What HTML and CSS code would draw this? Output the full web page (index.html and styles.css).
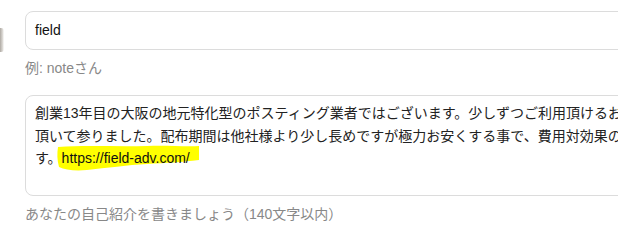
FILE: index.html
```html
<!DOCTYPE html>
<html lang="ja">
<head>
<meta charset="utf-8">
<link rel="stylesheet" href="styles.css">
</head>
<body>
<div class="page">
  <div class="edge"></div>
  <div class="form">
    <div class="input">field</div>
    <div class="hint hint-name">例: noteさん</div>
    <div class="textarea">
      <svg class="marker" width="150" height="30" viewBox="0 0 150 30" aria-hidden="true">
        <path d="M1 2 C30 0 60 2 90 1 C110 0 128 2 142 1 L142 15 C125 17 110 18 90 19 C70 20 50 23 30 25 C18 26 8 25 2 22 C0 15 0 8 1 2 Z" fill="#ffff00"/>
      </svg>
      <p class="bio">創業13年目の大阪の地元特化型のポスティング業者ではございます。少しずつご利用頂けるお客様が増え、ご利用<br>頂いて参りました。配布期間は他社様より少し長めですが極力お安くする事で、費用対効果の高い配布をしておりま<br>す。<span class="url">https://field-adv.com/</span></p>
    </div>
    <div class="hint">あなたの自己紹介を書きましょう（140文字以内）</div>
  </div>
</div>
</body>
</html>
```

FILE: styles.css
```css
html, body {
  margin: 0;
  padding: 0;
  background: #fff;
  overflow: hidden;
}
.page {
  display: flex;
  width: 618px;
  height: 246px;
  overflow: hidden;
  font-family: "Liberation Sans", "Noto Sans CJK JP", sans-serif;
  font-size: 14px;
  color: #222;
}
.edge {
  flex: 0 0 4px;
  height: 24px;
  margin-top: 28px;
  background: linear-gradient(to right, #9a948c, #d8d5d0 70%, #fff);
  border-radius: 0 3px 3px 0;
  opacity: 0.8;
}
.form {
  flex: 0 0 640px;
  margin-left: 21px;
  padding-top: 11px;
}
.input {
  height: 37px;
  border: 1px solid #dcdcdc;
  border-radius: 8px;
  padding: 0 9px;
  line-height: 37px;
  color: #111;
}
.hint {
  margin-top: 8px;
  line-height: 21px;
  color: #888;
}
.hint-name {
  margin-bottom: 16px;
}
.textarea {
  position: relative;
  height: 93px;
  border: 1px solid #dcdcdc;
  border-radius: 8px;
  padding: 6px 9px 0;
  overflow: hidden;
}
.marker {
  position: absolute;
  left: 31px;
  top: 49px;
}
.bio {
  position: relative;
  margin: 0;
  white-space: nowrap;
  line-height: 22.5px;
  color: #222;
}
.url {
  color: #111;
}
```
